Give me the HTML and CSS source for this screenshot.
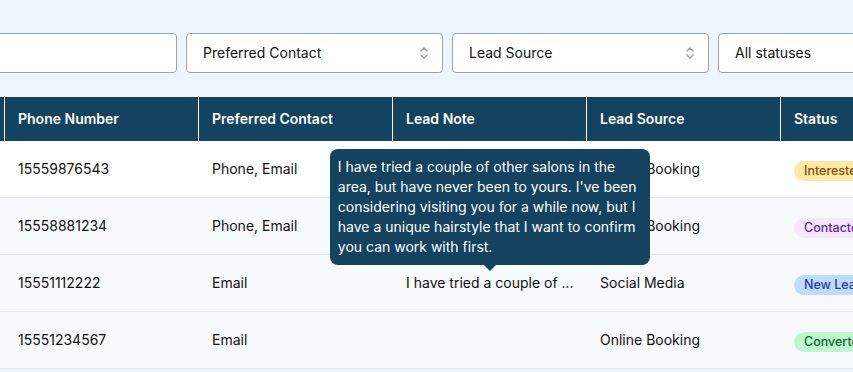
FILE: index.html
```html
<!DOCTYPE html>
<html lang="en">
<head>
    <meta charset="UTF-8">
    <meta name="viewport" content="width=device-width, initial-scale=1.0">
    <title>Leads</title>
    <link rel="stylesheet" href="styles.css">
</head>
<body>
    <div class="page">
        <div class="filters">
            <div class="field search"></div>
            <div class="field select">
                <span>Preferred Contact</span>
                <svg class="chevron" width="10" height="14" viewBox="0 0 10 14"><path d="M2 5l3-3 3 3M2 9l3 3 3-3" fill="none" stroke="#9ca3af" stroke-width="1.5" stroke-linecap="round" stroke-linejoin="round"/></svg>
            </div>
            <div class="field select">
                <span>Lead Source</span>
                <svg class="chevron" width="10" height="14" viewBox="0 0 10 14"><path d="M2 5l3-3 3 3M2 9l3 3 3-3" fill="none" stroke="#9ca3af" stroke-width="1.5" stroke-linecap="round" stroke-linejoin="round"/></svg>
            </div>
            <div class="field select">
                <span>All statuses</span>
                <svg class="chevron" width="10" height="14" viewBox="0 0 10 14"><path d="M2 5l3-3 3 3M2 9l3 3 3-3" fill="none" stroke="#9ca3af" stroke-width="1.5" stroke-linecap="round" stroke-linejoin="round"/></svg>
            </div>
        </div>

        <div class="table-wrap">
            <table class="leads">
                <colgroup>
                    <col><col><col><col><col><col>
                </colgroup>
                <thead>
                    <tr>
                        <th></th>
                        <th>Phone Number</th>
                        <th>Preferred Contact</th>
                        <th>Lead Note</th>
                        <th>Lead Source</th>
                        <th>Status</th>
                    </tr>
                </thead>
                <tbody>
                    <tr class="row-white">
                        <td></td>
                        <td>15559876543</td>
                        <td>Phone, Email</td>
                        <td></td>
                        <td>Online Booking</td>
                        <td><span class="badge interested">Interested</span></td>
                    </tr>
                    <tr>
                        <td></td>
                        <td>15558881234</td>
                        <td>Phone, Email</td>
                        <td></td>
                        <td>Online Booking</td>
                        <td><span class="badge contacted">Contacted</span></td>
                    </tr>
                    <tr>
                        <td></td>
                        <td>15551112222</td>
                        <td>Email</td>
                        <td>
                            <span class="note">
                                I have tried a couple of ...
                                <span class="tooltip">I have tried a couple of other salons in the area, but have never been to yours. I've been considering visiting you for a while now, but I have a unique hairstyle that I want to confirm you can work with first.</span>
                            </span>
                        </td>
                        <td>Social Media</td>
                        <td><span class="badge new-lead">New Lead</span></td>
                    </tr>
                    <tr>
                        <td></td>
                        <td>15551234567</td>
                        <td>Email</td>
                        <td></td>
                        <td>Online Booking</td>
                        <td><span class="badge converted">Converted</span></td>
                    </tr>
                </tbody>
            </table>
        </div>
    </div>
</body>
</html>
```

FILE: styles.css
```css
* {
    margin: 0;
    padding: 0;
    box-sizing: border-box;
}

body {
    font-family: 'Inter', 'Noto Sans', sans-serif;
    font-size: 14px;
    line-height: 20px;
    color: #111827;
    background-color: #eef5fd;
    overflow: hidden;
}

.page {
    padding-top: 33px;
}

.filters {
    display: flex;
    gap: 9px;
    margin-left: -80px;
}

.field {
    flex: 0 0 257px;
    height: 40px;
    background-color: #fff;
    border: 1px solid #9ca3af;
    border-radius: 4px;
    display: flex;
    align-items: center;
    justify-content: space-between;
    padding: 0 13px 0 16px;
    color: #111;
}

.chevron {
    display: block;
}

.table-wrap {
    margin-top: 24px;
    overflow: hidden;
}

.leads {
    margin-left: -189px;
    border-collapse: separate;
    border-spacing: 0;
    table-layout: fixed;
    width: 1164px;
}

.leads col {
    width: 194px;
}

.leads th {
    height: 44px;
    background-color: #13435f;
    color: #fff;
    font-weight: 600;
    text-align: left;
    padding: 0 12px 0 13px;
    border-right: 1px solid #fff;
    white-space: nowrap;
}

.leads td {
    height: 57px;
    background-color: #f8f9fb;
    padding: 0 12px 1px 13px;
    border-bottom: 1px solid #e2e5ea;
    white-space: nowrap;
    color: #111;
    vertical-align: middle;
}

.leads tr.row-white td {
    background-color: #fff;
}

.note {
    position: relative;
    display: inline-block;
    vertical-align: middle;
}

.tooltip {
    position: absolute;
    bottom: calc(100% + 8px);
    left: 50%;
    transform: translateX(-50%);
    width: 320px;
    padding: 8px;
    background-color: #13435f;
    color: #fff;
    border-radius: 8px;
    white-space: normal;
    z-index: 2;
}

.tooltip::after {
    content: '';
    position: absolute;
    top: 100%;
    left: 50%;
    margin-left: -6px;
    border-left: 6px solid transparent;
    border-right: 6px solid transparent;
    border-top: 6px solid #13435f;
}

.badge {
    display: inline-block;
    vertical-align: middle;
    font-size: 12.5px;
    line-height: 16px;
    font-weight: 500;
    padding: 2px 10px;
    border-radius: 999px;
    position: relative;
    top: 2px;
}

.interested {
    background-color: #fde9a3;
    color: #854d0e;
}

.contacted {
    background-color: #f3e8ff;
    color: #6b21a8;
}

.new-lead {
    background-color: #bfdbfe;
    color: #1e40af;
}

.converted {
    background-color: #bbf7d0;
    color: #166534;
}
```
